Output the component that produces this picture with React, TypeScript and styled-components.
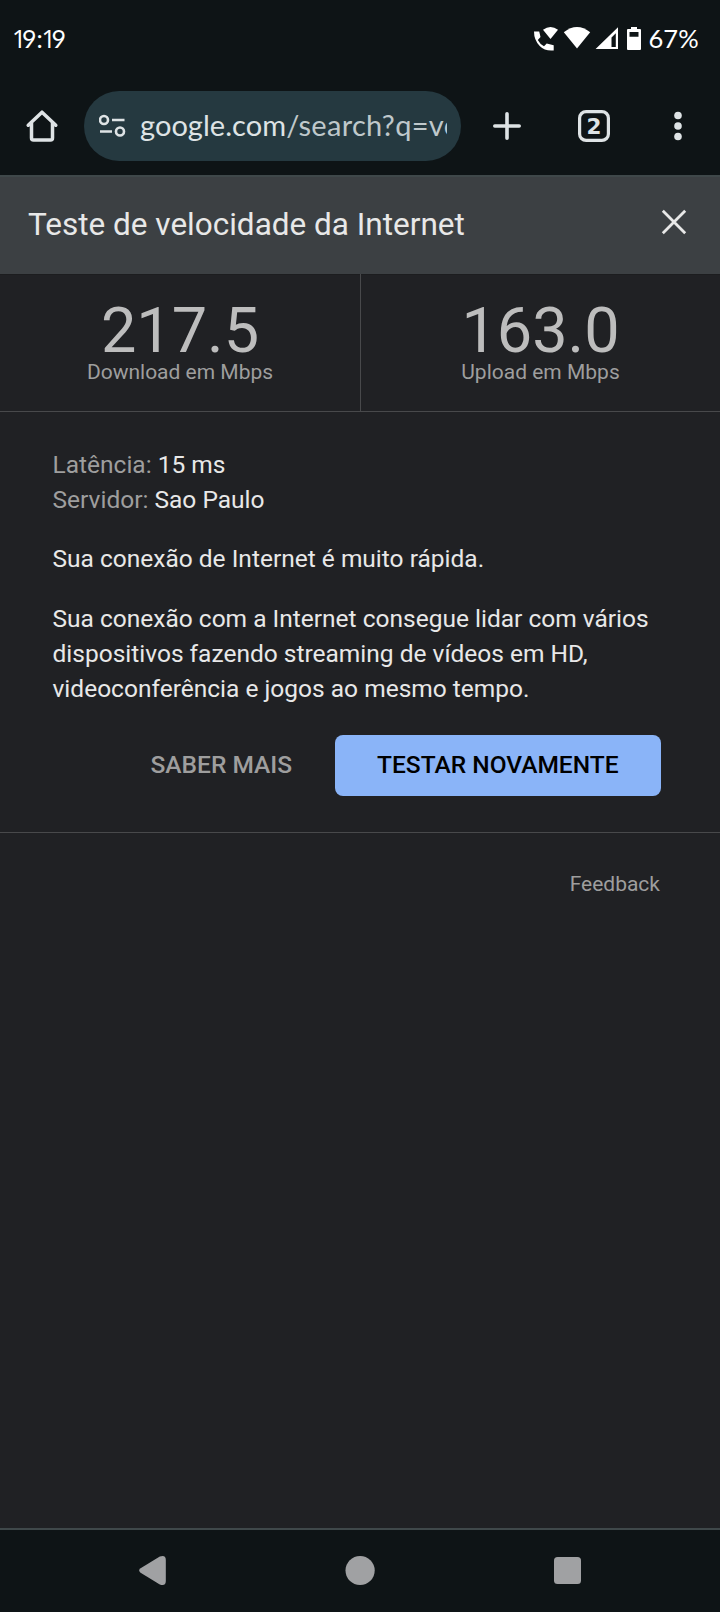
import React from "react";
import styled, { createGlobalStyle } from "styled-components";

const GlobalStyle = createGlobalStyle`
  * { box-sizing: border-box; }
  body { margin: 0; background: #202124; }
  button { border: 0; padding: 0; background: none; font: inherit; color: inherit; }
  svg { display: block; flex: none; }
`;

const Screen = styled.div`
  width: 720px;
  height: 1612px;
  display: flex;
  flex-direction: column;
  overflow: hidden;
  background: #202124;
  font-family: Roboto, sans-serif;
`;

const StatusBar = styled.header`
  height: 78px;
  display: flex;
  justify-content: space-between;
  align-items: center;
  padding: 0 21px 0 12px;
  background: #0e1416;
  color: #fff;
`;

const StatusText = styled.span`
  padding-bottom: 2px;
  font: 400 25.5px/32px Lato, sans-serif;
  letter-spacing: 0.2px;
`;

const Clock = styled.time`
  padding-bottom: 3px;
  font: 400 25px/32px Lato, sans-serif;
`;

const NarrowDigit = styled.span<{ $pull?: number }>`
  font-family: "Open Sans", sans-serif;
  line-height: 1;
  margin: 0 -4.3px 0 ${(p) => -(p.$pull ?? 0)}px;
`;

const StatusIcons = styled.div`
  display: flex;
  align-items: center;
  gap: 2px;
`;

const BrowserBar = styled.nav`
  height: 99px;
  display: flex;
  align-items: center;
  padding: 0 22px 1px 24px;
  background: #0e1416;
  border-bottom: 2px solid #3f484a;
  color: #dee3e5;
`;

const IconButton = styled.button<{ $left?: number }>`
  width: 36px;
  height: 36px;
  display: grid;
  place-items: center;
  flex: none;
  margin-left: ${(p) => p.$left ?? 0}px;
`;

const AddressBar = styled.div`
  width: 377px;
  height: 70px;
  margin-left: 24px;
  padding: 0 14px 0 15px;
  display: flex;
  align-items: center;
  border-radius: 35px;
  background: #253940;
`;

const Url = styled.div`
  flex: 1;
  margin-left: 14px;
  padding-bottom: 2px;
  overflow: hidden;
  white-space: nowrap;
  font: 400 29px/40px Lato, sans-serif;
  letter-spacing: 0.3px;
  color: #bfc8cb;
`;

const Host = styled.span`
  color: #dee3e5;
  letter-spacing: 0.05px;
`;

const TitleBar = styled.div`
  height: 97px;
  display: flex;
  justify-content: space-between;
  align-items: flex-start;
  padding: 27px 28px 0;
  background: #3c4043;
  color: #e8e8e8;
`;

const Title = styled.h1`
  margin: 0;
  font: 400 31.5px/41px Roboto, sans-serif;
`;

const Stats = styled.section`
  height: 138px;
  display: grid;
  grid-template-columns: 361px 359px;
  border-bottom: 1px solid #48494b;
  box-shadow: inset 0 1px 0 #1c1d1f;
`;

const Stat = styled.div`
  padding-top: 25px;
  text-align: center;
  &:first-child { border-right: 1px solid #48494b; }
`;

const StatValue = styled.div`
  font-size: 63px;
  line-height: 63px;
  color: #bdbdbd;
`;

const StatLabel = styled.div`
  font-size: 21px;
  line-height: 20px;
  color: #9e9e9e;
`;

const Details = styled.section`
  height: 421px;
  padding: 35px 59px 0 52.5px;
  border-bottom: 1px solid #48494b;
  font-size: 24.5px;
  line-height: 35px;
  color: #e8e8e8;
`;

const Muted = styled.span`
  color: #9e9e9e;
`;

const Paragraph = styled.p<{ $top: number }>`
  margin: ${(p) => p.$top}px 0 0;
`;

const Actions = styled.div`
  display: flex;
  justify-content: flex-end;
  margin-top: 29px;
  font-weight: 500;
`;

const ActionButton = styled.button<{ $primary?: boolean }>`
  height: 61px;
  padding: 0 42.5px 2px;
  border-radius: 8px;
  background: ${(p) => (p.$primary ? "#8ab4f8" : "transparent")};
  color: ${(p) => (p.$primary ? "#000" : "#9e9e9e")};
`;

const Feedback = styled.div`
  flex: 1;
  padding: 36px 60px 0 0;
  text-align: right;
  font-size: 21px;
  line-height: 30px;
  color: #9e9e9e;
`;

const SystemNav = styled.footer`
  height: 84px;
  display: flex;
  justify-content: space-between;
  padding: 24px 137px 0 137px;
  background: #0e1416;
  border-top: 2px solid #3f484a;
`;

export default function App() {
  return (
    <>
      <GlobalStyle />
      <Screen>
        <StatusBar>
          <Clock><NarrowDigit>1</NarrowDigit>9:<NarrowDigit $pull={1.4}>1</NarrowDigit>9</Clock>
          <StatusIcons>
            <svg width="114" height="28" viewBox="532 25 114 28" fill="#fff">
              <path d="M534 31.5h5.2l1.3 5.5-2.7 3q2.2 4.2 6.2 6.3l2.7-2.8 7 1.7v5.2q-8.6 1-14-4.5-5.7-5.7-5.7-14.4z" />
              <path d="M543 29.7q7.5-5.5 15 0L550.5 39z" />
              <path d="M563.8 32.3q13.2-10.8 26.4 0L577 48.6z" />
              <path fillRule="evenodd" d="M595.6 49 618 27.3V49zM611.5 37.5V47h4.3V33.2z" />
              <path fillRule="evenodd" d="M631 27h6v2h3q1 0 1 1v19q0 1-1 1h-12q-1 0-1-1V30q0-1 1-1h3zM629.5 32v4.7h9V32z" />
            </svg>
            <StatusText>67%</StatusText>
          </StatusIcons>
        </StatusBar>

        <BrowserBar>
          <IconButton aria-label="Home">
            <svg width="36" height="36" viewBox="24 108 36 36" fill="none" stroke="#dee3e5" strokeWidth="3.5" strokeLinejoin="round" strokeLinecap="round">
              <path d="M28.2 125.2 42 112.2 55.8 125.2M31.5 123v15q0 2 2 2h17q2 0 2-2v-15" />
            </svg>
          </IconButton>
          <AddressBar>
            <svg width="27" height="24" viewBox="99 114 27 24" fill="none" stroke="#dee3e5" strokeWidth="2.6">
              <circle cx="104" cy="120" r="4" />
              <path d="M112 120h12.5M100 131.5h12" />
              <circle cx="120" cy="131.5" r="4" />
            </svg>
            <Url><Host>google.com</Host>/search?q=velocidade</Url>
          </AddressBar>
          <IconButton $left={28} aria-label="New tab">
            <svg width="28" height="28" viewBox="0 0 28 28" stroke="#dee3e5" strokeWidth="3.6" strokeLinecap="round">
              <path d="M14 1.8v24.4M1.8 14h24.4" />
            </svg>
          </IconButton>
          <IconButton $left={51} aria-label="Tabs">
            <svg width="34" height="34" viewBox="0 0 34 34">
              <rect x="2.6" y="2.6" width="28.8" height="28.8" rx="6.5" fill="none" stroke="#dee3e5" strokeWidth="3.2" />
              <text x="17" y="25" textAnchor="middle" fontFamily="DejaVu Sans" fontWeight="700" fontSize="21.5" fill="#dee3e5">2</text>
            </svg>
          </IconButton>
          <IconButton $left={48} aria-label="Menu">
            <svg width="8" height="30" viewBox="0 0 8 30" fill="#dee3e5">
              <circle cx="4" cy="4.5" r="3.8" />
              <circle cx="4" cy="15" r="3.8" />
              <circle cx="4" cy="25.5" r="3.8" />
            </svg>
          </IconButton>
        </BrowserBar>

        <TitleBar>
          <Title>Teste de velocidade da Internet</Title>
          <IconButton aria-label="Fechar">
            <svg width="36" height="36" viewBox="656 204 36 36" stroke="#e8e8e8" strokeWidth="2.8">
              <path d="M662.8 210.8 685.2 233.2M685.2 210.8 662.8 233.2" />
            </svg>
          </IconButton>
        </TitleBar>

        <Stats>
          <Stat>
            <StatValue>217.5</StatValue>
            <StatLabel>Download em Mbps</StatLabel>
          </Stat>
          <Stat>
            <StatValue>163.0</StatValue>
            <StatLabel>Upload em Mbps</StatLabel>
          </Stat>
        </Stats>

        <Details>
          <div><Muted>Latência:</Muted> 15 ms</div>
          <div><Muted>Servidor:</Muted> Sao Paulo</div>
          <Paragraph $top={24}>Sua conexão de Internet é muito rápida.</Paragraph>
          <Paragraph $top={25}>
            Sua conexão com a Internet consegue lidar com vários dispositivos fazendo streaming de vídeos em HD,
            videoconferência e jogos ao mesmo tempo.
          </Paragraph>
          <Actions>
            <ActionButton>SABER MAIS</ActionButton>
            <ActionButton $primary>TESTAR NOVAMENTE</ActionButton>
          </Actions>
        </Details>

        <Feedback>Feedback</Feedback>

        <SystemNav>
          <svg width="32" height="34" viewBox="137 1554 32 34" fill="#a0a1a3">
            <path d="M140.6 1568.3 159.8 1556.6Q165.8 1554.5 165.8 1560V1581Q165.8 1586.5 159.8 1584.4L140.6 1572.7Q137.6 1570.5 140.6 1568.3Z" />
          </svg>
          <svg width="32" height="34" viewBox="344.3 1554 32 34" fill="#a0a1a3">
            <circle cx="360.4" cy="1570.5" r="14.6" />
          </svg>
          <svg width="32" height="34" viewBox="551 1554 32 34" fill="#a0a1a3">
            <rect x="554" y="1557" width="27" height="27" rx="3.5" />
          </svg>
        </SystemNav>
      </Screen>
    </>
  );
}
